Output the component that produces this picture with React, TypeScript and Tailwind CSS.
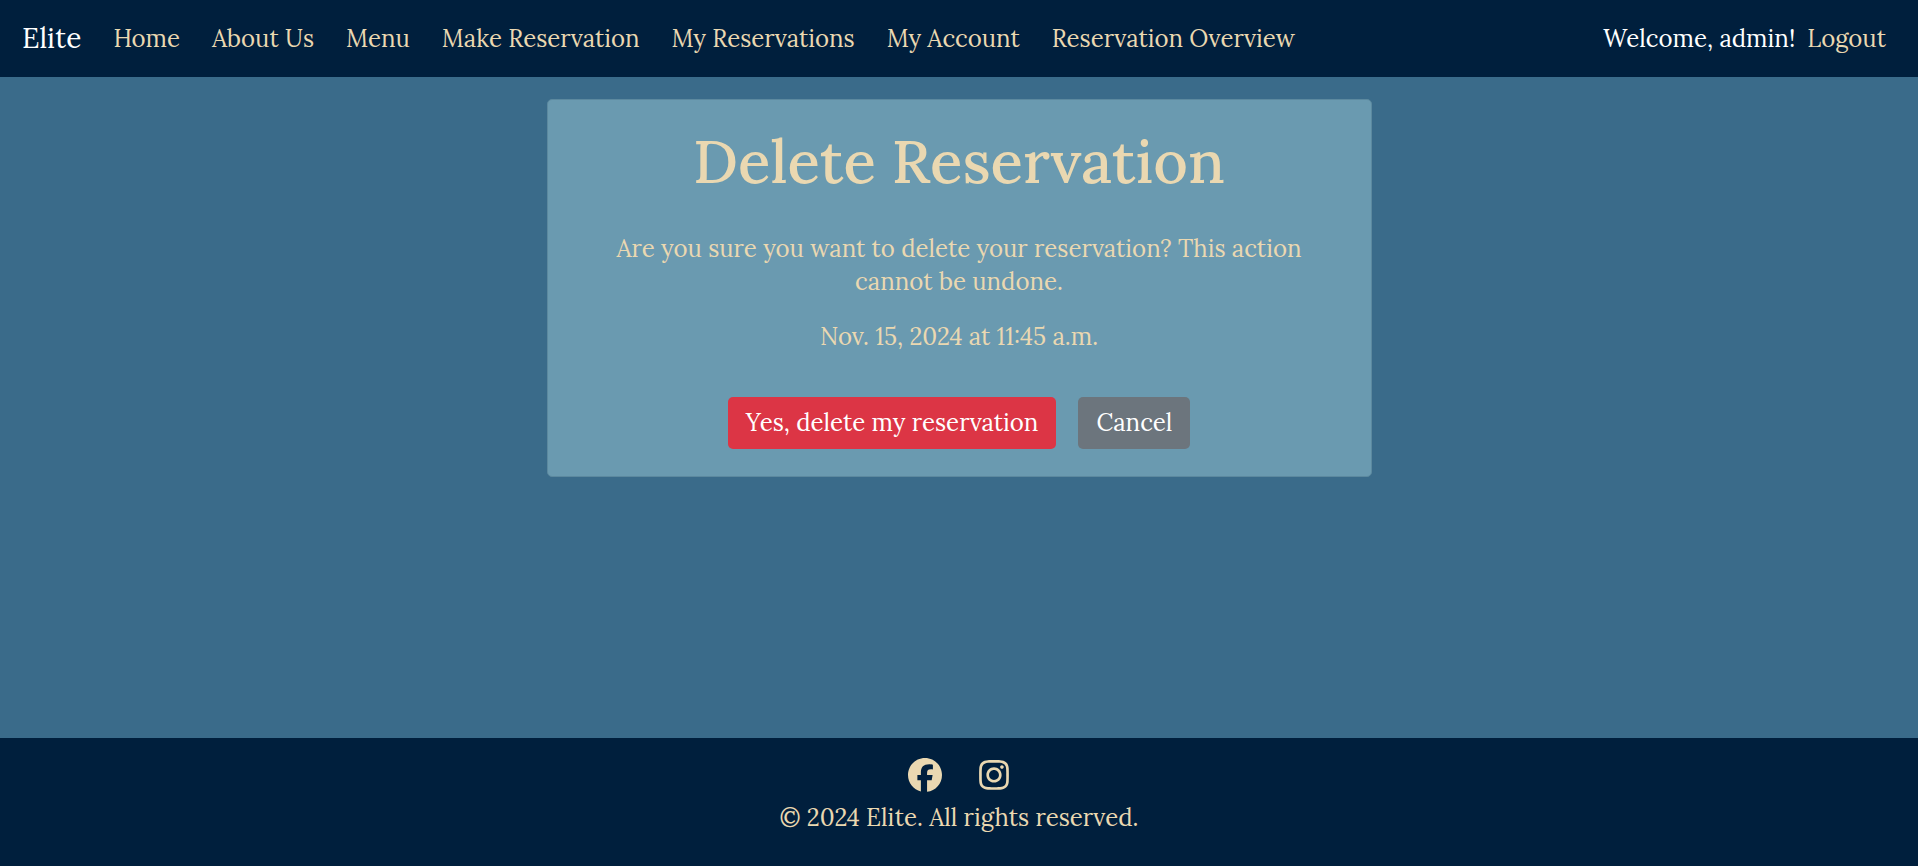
import { FaFacebook, FaInstagram } from "react-icons/fa6";

const links = [
  "Home",
  "About Us",
  "Menu",
  "Make Reservation",
  "My Reservations",
  "My Account",
  "Reservation Overview",
];

export default function App() {
  return (
    <div className="flex min-h-screen flex-col bg-[#3a6b8a] font-['Lora','Liberation_Serif',serif] text-2xl leading-[33px] text-[#ead8b1]">
      <header className="flex items-center bg-[#001f3d] py-[22px] pr-8 pl-[22px]">
        <nav aria-label="Main" className="flex grow items-center gap-8">
          <a href="#" className="text-[28px] text-white">
            Elite
          </a>
          {links.map((label) => (
            <a key={label} href="#" className="whitespace-nowrap">
              {label}
            </a>
          ))}
        </nav>
        <div className="flex items-center gap-3 whitespace-nowrap">
          <span className="text-white">Welcome, admin!</span>
          <a href="#">Logout</a>
        </div>
      </header>

      <main className="grow px-4 py-[22px]">
        <section className="mx-auto max-w-[825px] rounded-[5px] border border-[#5c899f] bg-[#6a9ab0] px-11 pt-7 pb-[27px] text-center">
          <h1 className="text-[60px] leading-[66px] font-medium">
            Delete Reservation
          </h1>
          <p className="mt-[38px]">
            Are you sure you want to delete your reservation? This action cannot
            be undone.
          </p>
          <p className="mt-[22px]">Nov. 15, 2024 at 11:45 a.m.</p>
          <div className="mt-11 flex justify-center gap-[22px] text-white">
            <button
              type="button"
              className="rounded-[5px] bg-[#dc3545] px-[18px] pt-[9px] pb-[10px]"
            >
              Yes, delete my reservation
            </button>
            <button
              type="button"
              className="rounded-[5px] bg-[#6c757d] px-[18px] pt-[9px] pb-[10px]"
            >
              Cancel
            </button>
          </div>
        </section>
      </main>

      <footer className="flex flex-col items-center bg-[#001f3d] pt-5 pb-8">
        <div className="flex items-center gap-[35px] text-[34px]">
          <a href="#" aria-label="Facebook">
            <FaFacebook />
          </a>
          <a href="#" aria-label="Instagram">
            <FaInstagram />
          </a>
        </div>
        <p className="mt-[9px]">© 2024 Elite. All rights reserved.</p>
      </footer>
    </div>
  );
}
